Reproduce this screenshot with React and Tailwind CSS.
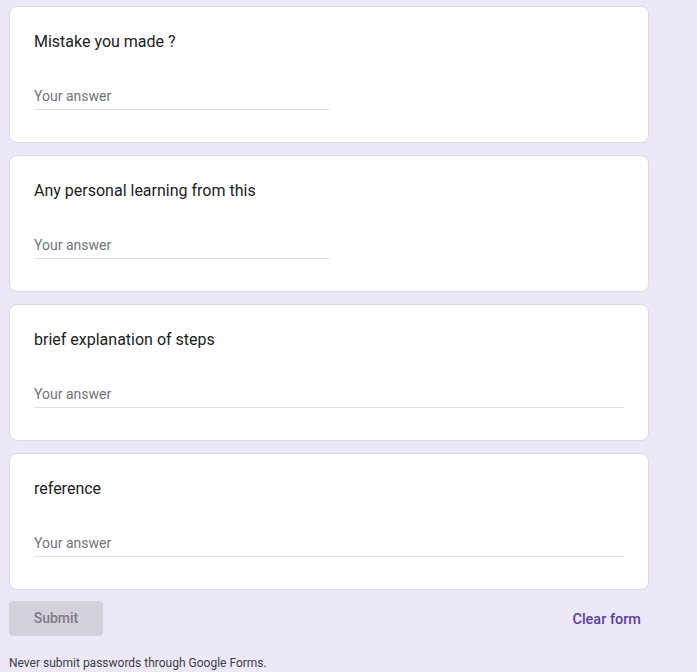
const questions = [
  { title: "Mistake you made ?", short: true },
  { title: "Any personal learning from this", short: true },
  { title: "brief explanation of steps", short: false },
  { title: "reference", short: false },
];

function Question({ title, short }) {
  return (
    <div className="bg-white border border-[#dadce0] rounded-lg px-6 pt-[23px] pb-[32px]">
      <div className="text-[16px] leading-6 text-[#202124]">{title}</div>
      <div
        className={`mt-[25px] h-[31px] flex items-end pb-[3px] border-b border-[#e0e0e0] ${short ? "w-[296px]" : "w-full"}`}
      >
        <span className="text-[14px] leading-5 text-[#70757a]">Your answer</span>
      </div>
    </div>
  );
}

export default function App() {
  return (
    <div
      className="min-h-[672px] bg-[#ede8f7] pt-[6px] pl-[9px]"
      style={{ fontFamily: "Roboto, 'Liberation Sans', sans-serif" }}
    >
      <div className="w-[640px] flex flex-col gap-3">
        {questions.map((q, i) => (
          <Question key={i} title={q.title} short={q.short} />
        ))}

        {/* Actions */}
        <div className="flex items-center justify-between pr-2 -mt-px">
          <button className="w-[94px] h-[35px] rounded bg-[#d5d1dc] text-[14px] font-medium text-[#7d7a84]">
            Submit
          </button>
          <span className="text-[14.5px] font-medium text-[#5b3f99] pt-[2px]">Clear form</span>
        </div>
      </div>

      <p className="mt-[18px] text-[12px] text-[#3c4043]">
        Never submit passwords through Google Forms.
      </p>
    </div>
  );
}
